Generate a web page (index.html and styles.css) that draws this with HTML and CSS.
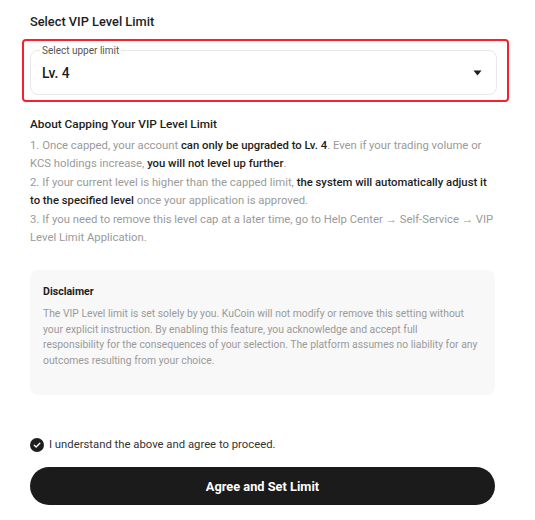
FILE: index.html
```html
<!DOCTYPE html>
<html lang="en">
<head>
<meta charset="utf-8">
<title>Select VIP Level Limit</title>
<link rel="stylesheet" href="styles.css">
</head>
<body>
<main class="page">
  <h1 class="title">Select VIP Level Limit</h1>
  <div class="highlight">
    <fieldset class="field">
      <legend class="field-label">Select upper limit</legend>
      <div class="field-row">
        <span class="field-value">Lv. 4</span>
        <svg class="caret" width="9" height="6" viewBox="0 0 9 6"><path d="M0.5 0.5 H8.5 L4.5 5.5 Z" fill="#1d1d1d"/></svg>
      </div>
    </fieldset>
  </div>

  <h2 class="about-title">About Capping Your VIP Level Limit</h2>
  <ol class="rules">
    <li>1. Once capped, your account <b>can only be upgraded to Lv. 4</b>. Even if your trading volume or KCS holdings increase, <b>you will not level up further</b>.</li>
    <li>2. If your current level is higher than the capped limit, <b>the system will automatically adjust it to the specified level</b> once your application is approved.</li>
    <li>3. If you need to remove this level cap at a later time, go to Help Center → Self-Service → VIP Level Limit Application.</li>
  </ol>

  <section class="disclaimer">
    <h3 class="disclaimer-title">Disclaimer</h3>
    <p class="disclaimer-text">The VIP Level limit is set solely by you. KuCoin will not modify or remove this setting without your explicit instruction. By enabling this feature, you acknowledge and accept full responsibility for the consequences of your selection. The platform assumes no liability for any outcomes resulting from your choice.</p>
  </section>

  <label class="agree">
    <span class="check">
      <svg width="14" height="14" viewBox="0 0 14 14"><circle cx="7" cy="7" r="7" fill="#1d1d1d"/><path d="M4.3 7.2 L6.2 9 L9.8 5.3" fill="none" stroke="#fff" stroke-width="1.4" stroke-linecap="round" stroke-linejoin="round"/></svg>
    </span>
    <span class="agree-text">I understand the above and agree to proceed.</span>
  </label>

  <button class="submit" type="button">Agree and Set Limit</button>
</main>
</body>
</html>
```

FILE: styles.css
```css
* { box-sizing: border-box; }
html, body { margin: 0; padding: 0; background: #fff; }
body { font-family: Roboto, "Liberation Sans", Arial, sans-serif; color: #1d1d1d; }

.page {
  width: 535px;
  padding: 13px 39px 0 30px;
  display: flex;
  flex-direction: column;
}

.title {
  margin: 0;
  font-size: 12.8px;
  font-weight: 500;
  line-height: 17px;
  color: #1d1d1d;
}

.highlight {
  margin: 9px -13px 0 -8px;
  border: 2px solid #f5222d;
  border-radius: 4px;
  padding: 3px 10px 5px 6px;
}

.field {
  margin: 0;
  border: 1px solid #e8e8e8;
  border-radius: 8px;
  padding: 0 14px 0 11px;
  min-width: 0;
  height: 51px;
}

.field-label {
  margin-left: -2px;
  padding: 0 2px;
  font-size: 10px;
  line-height: 13px;
  color: #555;
}

.field-row {
  display: flex;
  align-items: center;
  justify-content: space-between;
  height: 30px;
  margin-top: 1px;
}

.field-value {
  font-size: 13.8px;
  font-weight: 500;
  color: #1d1d1d;
}

.caret { display: block; }

.about-title {
  margin: 14px 0 0;
  font-size: 11.8px;
  font-weight: 500;
  line-height: 16px;
  color: #1d1d1d;
}

.rules {
  list-style: none;
  margin: 5px 0 0;
  padding: 0;
  display: flex;
  flex-direction: column;
  gap: 2px;
}

.rules li {
  font-size: 11.3px;
  line-height: 17.5px;
  color: #9a9a9a;
}

.rules b {
  font-weight: 500;
  color: #1d1d1d;
}

.disclaimer {
  margin-top: 24px;
  margin-right: 1px;
  background: #f8f8f8;
  border-radius: 8px;
  padding: 15px 17px 22px 13px;
  height: 125px;
}

.disclaimer-title {
  margin: 0;
  font-size: 10.6px;
  font-weight: 700;
  line-height: 14px;
  color: #1d1d1d;
}

.disclaimer-text {
  margin: 7px 0 0;
  font-size: 10.35px;
  line-height: 15.5px;
  color: #9a9a9a;
}

.agree {
  margin-top: 42px;
  display: flex;
  align-items: center;
  gap: 5px;
}

.check { display: flex; }

.agree-text {
  font-size: 11.3px;
  line-height: 16px;
  color: #333;
}

.submit {
  margin-top: 14px;
  margin-right: 1px;
  height: 38px;
  border: none;
  border-radius: 19px;
  background: #1b1b1b;
  color: #fff;
  font-family: Roboto, "Liberation Sans", Arial, sans-serif;
  font-size: 12.8px;
  font-weight: 700;
}
```
